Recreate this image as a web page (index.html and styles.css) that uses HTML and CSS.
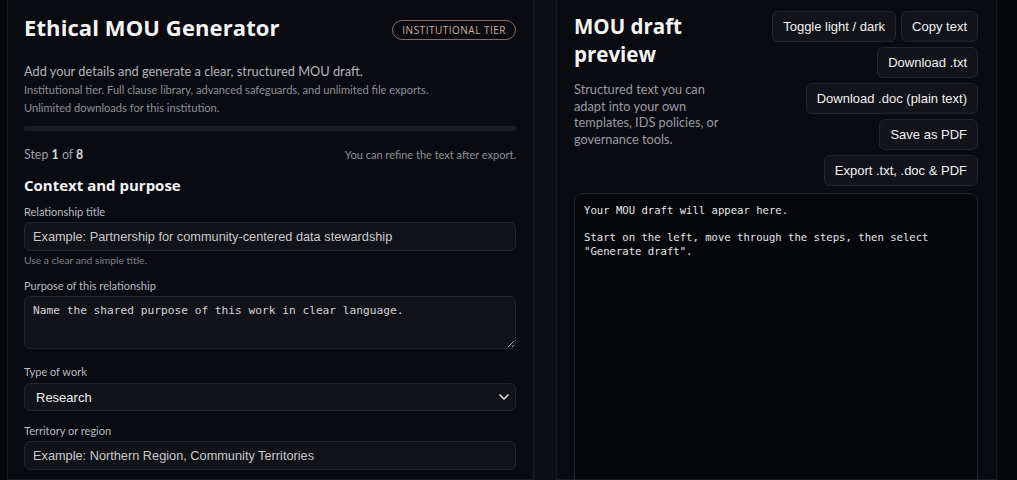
FILE: index.html
```html
<!DOCTYPE html>
<html lang="en">
<head>
    <meta charset="UTF-8">
    <meta name="viewport" content="width=device-width, initial-scale=1.0">
    <title>Ethical MOU Generator</title>
    <link rel="stylesheet" href="styles.css">
</head>
<body>
    <div class="layout">

        <!-- Form side -->
        <section class="panel panel-form">
            <div class="form-head">
                <h1>Ethical MOU Generator</h1>
                <span class="tier-badge">Institutional tier</span>
            </div>
            <p class="lead">Add your details and generate a clear, structured MOU draft.</p>
            <p class="tier-note">Institutional tier. Full clause library, advanced safeguards, and unlimited file exports.</p>
            <p class="tier-note">Unlimited downloads for this institution.</p>

            <div class="progress"><div class="progress-fill" style="width: 0%"></div></div>

            <div class="step-row">
                <span class="step-count">Step <b>1</b> of <b>8</b></span>
                <span class="step-tip">You can refine the text after export.</span>
            </div>

            <h2>Context and purpose</h2>

            <div class="field">
                <label for="relTitle">Relationship title</label>
                <input type="text" id="relTitle" placeholder="Example: Partnership for community-centered data stewardship">
                <p class="hint">Use a clear and simple title.</p>
            </div>

            <div class="field">
                <label for="purpose">Purpose of this relationship</label>
                <textarea id="purpose" placeholder="Name the shared purpose of this work in clear language."></textarea>
            </div>

            <div class="field field-wide">
                <label for="workType">Type of work</label>
                <div class="select-wrap">
                    <select id="workType">
                        <option>Research</option>
                        <option>Evaluation</option>
                        <option>Service delivery</option>
                    </select>
                    <svg class="chevron" width="10" height="6" viewBox="0 0 10 6"><path d="M1 1l4 4 4-4" fill="none" stroke="#e6e6e8" stroke-width="1.6" stroke-linecap="round" stroke-linejoin="round"/></svg>
                </div>
            </div>

            <div class="field field-region">
                <label for="region">Territory or region</label>
                <input type="text" id="region" placeholder="Example: Northern Region, Community Territories">
            </div>
        </section>

        <!-- Preview side -->
        <section class="panel panel-preview">
            <div class="preview-head">
                <div class="preview-intro">
                    <h2 class="preview-title">MOU draft preview</h2>
                    <p class="preview-desc">Structured text you can adapt into your own templates, IDS policies, or governance tools.</p>
                </div>
                <div class="actions">
                    <button type="button">Toggle light / dark</button>
                    <button type="button">Copy text</button>
                    <button type="button">Download .txt</button>
                    <button type="button">Download .doc (plain text)</button>
                    <button type="button">Save as PDF</button>
                    <button type="button">Export .txt, .doc &amp; PDF</button>
                </div>
            </div>
            <pre class="draft">Your MOU draft will appear here.

Start on the left, move through the steps, then select
"Generate draft".</pre>
        </section>

    </div>
</body>
</html>
```

FILE: styles.css
```css
/* Dark two-column generator layout */
body {
    margin: 0;
    background: #07080b;
    color: #e9e9ec;
    font-family: Lato, "Open Sans", Arial, sans-serif;
    overflow: hidden;
}

.layout {
    display: grid;
    grid-template-columns: 527px 441px;
    column-gap: 22px;
    width: 990px;
    margin-left: 7px;
    background: #0e0f14;
    min-height: 480px;
}

.panel {
    background: #0a0b10;
    border: 1px solid #1b1c22;
    border-top: none;
    height: 480px;
    box-sizing: border-box;
    overflow: hidden;
}

.panel-form {
    padding: 12px 17px 0 16px;
}

.panel-preview {
    padding: 11px 18px 0 17px;
}

/* Form header */
.form-head {
    display: flex;
    justify-content: space-between;
    align-items: center;
}

h1 {
    margin: 0;
    font-family: "Open Sans", Arial, sans-serif;
    font-size: 22px;
    line-height: 30px;
    font-weight: 700;
    color: #f4f4f6;
    letter-spacing: 0.1px;
}

.tier-badge {
    margin-top: 5px;
    padding: 2px 9px;
    border: 1px solid #8b6b5e;
    border-radius: 999px;
    font-family: "Open Sans", Arial, sans-serif;
    font-size: 10px;
    line-height: 14px;
    letter-spacing: 0.5px;
    text-transform: uppercase;
    color: #cfae9e;
}

.lead {
    margin: 19px 0 0;
    font-size: 12.8px;
    line-height: 20px;
    color: #b3b5bc;
}

.tier-note {
    margin: 0;
    font-size: 11.1px;
    line-height: 18px;
    color: #8e9098;
}

.progress {
    margin-top: 9px;
    height: 5px;
    border-radius: 3px;
    background: #1c1d24;
    overflow: hidden;
}

.progress-fill {
    height: 100%;
    background: #c89a84;
}

.step-row {
    margin-top: 14px;
    display: flex;
    justify-content: space-between;
    align-items: baseline;
    line-height: 20px;
}

.step-count {
    font-size: 12.4px;
    color: #9c9ea6;
}

.step-count b {
    color: #d6d7db;
    font-weight: 700;
}

.step-tip {
    font-size: 11px;
    color: #8e9098;
}

h2 {
    margin: 8px 0 0;
    font-family: "Open Sans", Arial, sans-serif;
    font-size: 15px;
    line-height: 24px;
    font-weight: 700;
    color: #f4f4f6;
}

/* Fields */
.field {
    margin-top: 7px;
}

.field + .field {
    margin-top: 11px;
}

.field.field-wide {
    margin-top: 15px;
}

.field.field-region {
    margin-top: 12px;
}

label {
    display: block;
    margin-bottom: 2px;
    font-size: 11px;
    line-height: 16px;
    color: #b8bac0;
}

input[type="text"],
textarea,
select {
    display: block;
    box-sizing: border-box;
    width: 100%;
    margin: 0;
    background: #121319;
    border: 1px solid #24252c;
    border-radius: 6px;
    color: #f0f0f2;
}

input[type="text"] {
    height: 29px;
    padding: 0 8px;
    font-family: "Liberation Sans", Arial, sans-serif;
    font-size: 12.75px;
}

input::placeholder {
    color: #c9c9cc;
    opacity: 1;
}

textarea {
    height: 53px;
    padding: 7px 8px;
    font-family: "DejaVu Sans Mono", monospace;
    font-size: 11.2px;
    line-height: 14px;
    resize: vertical;
}

textarea::placeholder {
    color: #d2d2d5;
    opacity: 1;
}

.hint {
    margin: 2px 0 0;
    font-size: 10.3px;
    line-height: 14px;
    color: #7f8189;
}

.select-wrap {
    position: relative;
    margin-top: 3px;
}

select {
    height: 28px;
    padding: 0 11px;
    appearance: none;
    font-family: "Liberation Sans", Arial, sans-serif;
    font-size: 13px;
}

.chevron {
    position: absolute;
    right: 7px;
    top: 11px;
    pointer-events: none;
}

#region {
    margin-top: 2px;
}

/* Preview side */
.preview-head {
    display: flex;
    justify-content: space-between;
    align-items: flex-start;
}

.preview-intro {
    width: 160px;
}

.preview-title {
    margin: 1px 0 0;
    font-size: 20.5px;
    line-height: 28px;
}

.preview-desc {
    margin: 13px 0 0;
    font-size: 12.75px;
    line-height: 16.7px;
    color: #9a9ca4;
}

.actions {
    width: 210px;
    display: flex;
    flex-wrap: wrap;
    justify-content: flex-end;
    gap: 5px;
}

button {
    height: 31px;
    padding: 0 10px;
    background: #13141a;
    color: #f0f0f2;
    border: 1px solid #25262d;
    border-radius: 6px;
    font-family: "Liberation Sans", Arial, sans-serif;
    font-size: 13px;
    cursor: pointer;
}

button:hover {
    background: #1a1b22;
}

.draft {
    margin: 7px 0 0;
    min-height: 320px;
    padding: 10px 9px 9px;
    background: #06070a;
    border: 1px solid #22232a;
    border-radius: 8px;
    font-family: "DejaVu Sans Mono", monospace;
    font-size: 10.6px;
    line-height: 13.5px;
    color: #e6e6e9;
    white-space: pre-wrap;
}
```
